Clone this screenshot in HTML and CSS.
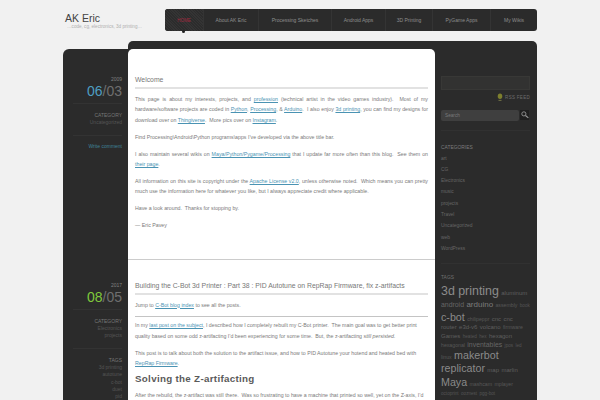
FILE: index.html
```html
<!DOCTYPE html>
<html lang="en">
<head>
<meta charset="utf-8">
<title>AK Eric</title>
<link rel="stylesheet" href="styles.css">
</head>
<body>
<div class="page">
  <header class="top">
    <div class="brand">
      <h1>AK Eric</h1>
      <p>…code, cg, electronics, 3d printing…</p>
    </div>
    <nav class="nav">
      <a class="active">HOME</a>
      <a>About AK Eric</a>
      <a>Processing Sketches</a>
      <a>Android Apps</a>
      <a>3D Printing</a>
      <a>PyGame Apps</a>
      <a class="last">My Wikis</a>
    </nav>
  </header>
  <div class="layout">
    <main class="posts">
      <div class="band"></div>
      <div class="post first">
        <aside class="meta">
          <div class="year">2009</div>
          <div class="date"><b class="blue">06</b>/03</div>
          <div class="rule"></div>
          <h4>CATEGORY</h4>
          <p>Uncategorized</p>
          <div class="rule"></div>
          <a class="comment">Write comment</a>
        </aside>
        <article class="article">
          <h2>Welcome</h2>
          <p class="j">This page is about my interests, projects, and <a>profession</a> (technical artist in the video games industry).&nbsp; Most of my hardware/software projects are coded in <a>Python</a>, <a>Processing</a>, &amp; <a>Arduino</a>.&nbsp; I also enjoy <a>3d printing</a>, you can find my designs for download over on <a>Thingiverse</a>.&nbsp; More pics over on <a>Instagram</a>.</p>
          <p>Find Processing\Android\Python programs\apps I’ve developed via the above title bar.</p>
          <p class="j">I also maintain several wikis on <a>Maya/Python/Pygame/Processing</a> that I update far more often than this blog.&nbsp; See them on <a>their page</a>.</p>
          <p class="j">All information on this site is copyright under the <a>Apache License v2.0</a>, unless otherwise noted.&nbsp; Which means you can pretty much use the information here for whatever you like, but I always appreciate credit where applicable.</p>
          <p>Have a look around.&nbsp; Thanks for stopping by.</p>
          <p>— Eric Pavey</p>
        </article>
      </div>
      <div class="post second">
        <aside class="meta">
          <div class="year">2017</div>
          <div class="date"><b class="green">08</b>/05</div>
          <div class="rule"></div>
          <h4>CATEGORY</h4>
          <p>Electronics<br>projects</p>
          <div class="rule"></div>
          <h4>TAGS</h4>
          <p>3d printing<br>autotune<br>c-bot<br>duet<br>pid</p>
        </aside>
        <article class="article">
          <h2>Building the C-Bot 3d Printer : Part 38 : PID Autotune on RepRap Firmware, fix z-artifacts</h2>
          <p>Jump to <a>C-Bot blog index</a> to see all the posts.</p>
          <hr>
          <p>In my <a>last post on the subject</a>, I described how I completely rebuilt my C-Bot printer.&nbsp; The main goal was to get better print quality based on some odd z-artifacting I’d been experiencing for some time.&nbsp; But, the z-artifacting <i>still persisted</i>.</p>
          <p>This post is to talk about both the solution to the artifact issue, and how to PID Autotune your hotend and heated bed with <a>RepRap Firmware</a>.</p>
          <h3>Solving the Z-artifacting</h3>
          <p>After the rebuild, the z-artifact was still there.&nbsp; Was so frustrating to have a machine that printed so well, yet on the Z-axis, I’d</p>
        </article>
      </div>
    </main>
    <aside class="sidebar">
      <div class="emptybox"></div>
      <div class="rss"><svg viewBox="0 0 8 10" width="6" height="8"><ellipse cx="4" cy="4" rx="3" ry="3.6" fill="#7d7f2e"/><path d="M2 9.5h4" stroke="#8a8a50" stroke-width="1"/></svg><span>RSS FEED</span></div>
      <div class="search">
        <span class="field">Search</span>
        <span class="go"><svg viewBox="0 0 10 10" width="8" height="8"><circle cx="3.6" cy="3.6" r="2.6" fill="none" stroke="#999" stroke-width="1.1"/><path d="M5.6 5.6 9.2 8.6" stroke="#999" stroke-width="1.4"/></svg></span>
      </div>
      <div class="rule side"></div>
      <h5>CATEGORIES</h5>
      <ul class="cats">
        <li>art</li><li>CG</li><li>Electronics</li><li>music</li><li>projects</li><li>Travel</li><li>Uncategorized</li><li>web</li><li>WordPress</li>
      </ul>
      <div class="rule side lower"></div>
      <h5 class="tagshead">TAGS</h5>
      <div class="cloud">
        <div class="cl c1"><span class="xl">3d printing</span> <span class="s6">aluminum</span></div>
        <div class="cl c2"><span class="s7">android</span> <span class="s8">arduino</span> <span class="s5">assembly</span> <span class="s45">book</span></div>
        <div class="cl c3"><span class="lg">c-bot</span> <span class="s5">chilipeppr</span> <span class="s6">cnc</span> <span class="s6">cnc</span></div>
        <div class="cl c4"><span class="s6">router</span> <span class="s6">e3d-v6</span> <span class="s6">volcano</span> <span class="s5">firmware</span></div>
        <div class="cl c5"><span class="s6">Games</span> <span class="s45">heated</span> <span class="s45">hex</span> <span class="s6">hexagon</span></div>
        <div class="cl c6"><span class="s5">hexagonal</span> <span class="s7">inventables</span> <span class="s45">jpos</span> <span class="s45">led</span></div>
        <div class="cl c7"><span class="s5">linux</span> <span class="lg">makerbot</span></div>
        <div class="cl c8"><span class="lg">replicator</span> <span class="s6">map</span> <span class="s6">marlin</span></div>
        <div class="cl c9"><span class="lg">Maya</span> <span class="s5">mashcam</span> <span class="s5">mplayer</span></div>
        <div class="cl c10"><span class="s45">octoprint</span> <span class="s45">ooznest</span> <span class="s45">pgg-bot</span></div>
      </div>
    </aside>
  </div>
</div>
</body>
</html>
```
FILE: styles.css
```css
* { box-sizing: border-box; }
html, body { margin: 0; height: 400px; overflow: hidden; }
body { background: #f1f1f1; font-family: "Liberation Sans", Arial, sans-serif; color: #666; font-size: 5px; }
.page { width: 474px; margin-left: 63px; }
.top { display: flex; height: 41px; padding-top: 9px; }
.brand { width: 102px; padding-left: 2px; }
.brand h1 { margin: 3px 0 0; font-weight: normal; font-size: 10.5px; line-height: 12px; color: #444; }
.brand p { margin: 0 0 0 2px; font-size: 4.6px; line-height: 6px; color: #b0b0b0; white-space: nowrap; }
.nav { width: 372px; height: 22px; display: flex; background: #2b2b2b; border-radius: 3px; }
.nav a { display: flex; align-items: center; justify-content: center; flex: none; font-size: 5px; color: #8e8e8e; border-right: 1px solid #343434; }
.nav a:nth-child(2) { width: 55px; }
.nav a:nth-child(3) { width: 73px; }
.nav a:nth-child(4) { width: 54px; }
.nav a:nth-child(5) { width: 47px; }
.nav a:nth-child(6) { width: 58px; }
.nav a.last { width: 46px; border-right: 0; }
.nav a.active { width: 39px; color: #a32a40; font-size: 4.5px; background: repeating-linear-gradient(45deg, #2c2c2c 0 1px, #343434 1px 2px); border-radius: 3px 0 0 3px; position: relative; }
.nav a.active::after { content: ""; position: absolute; left: 17px; bottom: -2px; width: 3px; height: 3px; background: #222; border-radius: 50%; }
.layout { display: flex; align-items: flex-start; }
.posts { width: 372px; }
.band { height: 8px; margin-left: 65px; background: #2b2b2b; border-radius: 5px 0 0 0; }
.post { display: flex; background: #2b2b2b; }
.first { border-radius: 6px 0 0 0; height: 210px; }
.second { height: 141px; }
.meta { width: 65px; padding: 0 6px; text-align: right; }
.first .meta { padding-top: 27px; }
.second .meta { padding-top: 23px; }
.year { font-size: 5px; line-height: 6px; color: #808080; }
.date { font-size: 14px; line-height: 16px; color: #6f6f6f; margin-top: 0.5px; }
.date b { font-weight: normal; }
.blue { color: #4e9ec2; }
.green { color: #7fc93c; }
.rule { height: 1px; background: #333; margin: 8.5px 0 7.5px 4px; }
.date + .rule { margin: 4px 0 8.5px 4px; }
.meta h4 { margin: 0; font-weight: normal; font-size: 5px; line-height: 7px; color: #777; }
.meta p { margin: 0; font-size: 5px; line-height: 7.4px; color: #555; }
.comment { display: block; font-size: 5px; line-height: 7px; color: #3f8298; }
.article { width: 307px; background: #fff; padding: 0 7px; border-radius: 5px 5px 0 0; overflow: hidden; }
.first .article { padding-top: 26px; }
.second .article { padding-top: 20.5px; border-radius: 0; border-top: 1px solid #ccc; }
.article h2 { margin: 0 0 5px; padding-bottom: 3px; font-weight: normal; font-size: 6.85px; line-height: 9px; color: #777; border-bottom: 2px solid #e2e2e2; white-space: nowrap; }
.article p { margin: 0 0 6.5px; font-size: 5.25px; line-height: 10.4px; color: #7a7a7a; }
.article p.j { text-align: justify; }
.article a { color: #4a93b3; text-decoration: underline; }
.article hr { border: 0; border-top: 1px solid #c4c4c4; margin: 0 0 3px; }
.article h3 { margin: -1px 0 5.8px; font-size: 9.8px; letter-spacing: 0.3px; line-height: 10px; color: #5a5a5a; }
.sidebar { width: 102px; height: 359px; background: #2b2b2b; border-radius: 0 5px 0 0; padding: 35px 7px 0 6px; }
.emptybox { height: 14px; background: #323231; border: 1px solid #383836; }
.rss { display: flex; justify-content: flex-end; align-items: center; gap: 2px; margin-top: 2px; height: 10px; font-size: 4.5px; letter-spacing: 0.3px; color: #6e6e6e; }
.search { display: flex; justify-content: space-between; margin-top: 8px; height: 11px; }
.field { width: 78px; background: #3f3f3f; border-radius: 2px; padding-left: 4px; font-size: 4.7px; line-height: 11px; color: #7a7a7a; }
.go { width: 9px; height: 10px; background: #1f1f1f; display: flex; align-items: center; justify-content: center; margin-right: 1px; }
.rule.side { margin: 9px 0 0; background: #313131; }
.sidebar h5 { margin: 12.5px 0 0; font-weight: normal; font-size: 4.9px; line-height: 7px; color: #7c7c7c; }
.cats { list-style: none; margin: 2px 0 0; padding: 0; }
.cats li { font-size: 4.9px; line-height: 11.3px; color: #666; }
.rule.side.lower { margin-top: 9px; }
.sidebar h5.tagshead { margin-top: 9.5px; color: #707070; }
.cloud { margin-top: 3px; color: #5e5e5e; font-size: 5px; white-space: nowrap; }
.cl { display: flex; align-items: baseline; gap: 2.4px; }
.c1 { height: 14px; line-height: 14px; }
.c2 { height: 13px; line-height: 13px; }
.c3 { height: 12px; line-height: 12px; }
.c4 { height: 9px; line-height: 9px; }
.c5 { height: 8.5px; line-height: 8.5px; }
.c6 { height: 9px; line-height: 9px; }
.c7 { height: 13px; line-height: 13px; }
.c8 { height: 13.5px; line-height: 13.5px; }
.c9 { height: 13.5px; line-height: 13.5px; }
.c10 { height: 9px; line-height: 9px; }
.s45 { font-size: 4.6px; color: #555; }
.s5 { font-size: 5.2px; color: #585858; }
.s6 { font-size: 6px; color: #5f5f5f; }
.s7 { font-size: 6.9px; color: #666; }
.s8 { font-size: 8px; color: #7c7c7c; }
.lg { font-size: 10.7px; color: #8a8a8a; }
.xl { font-size: 12.4px; color: #8c8c8c; }
```
